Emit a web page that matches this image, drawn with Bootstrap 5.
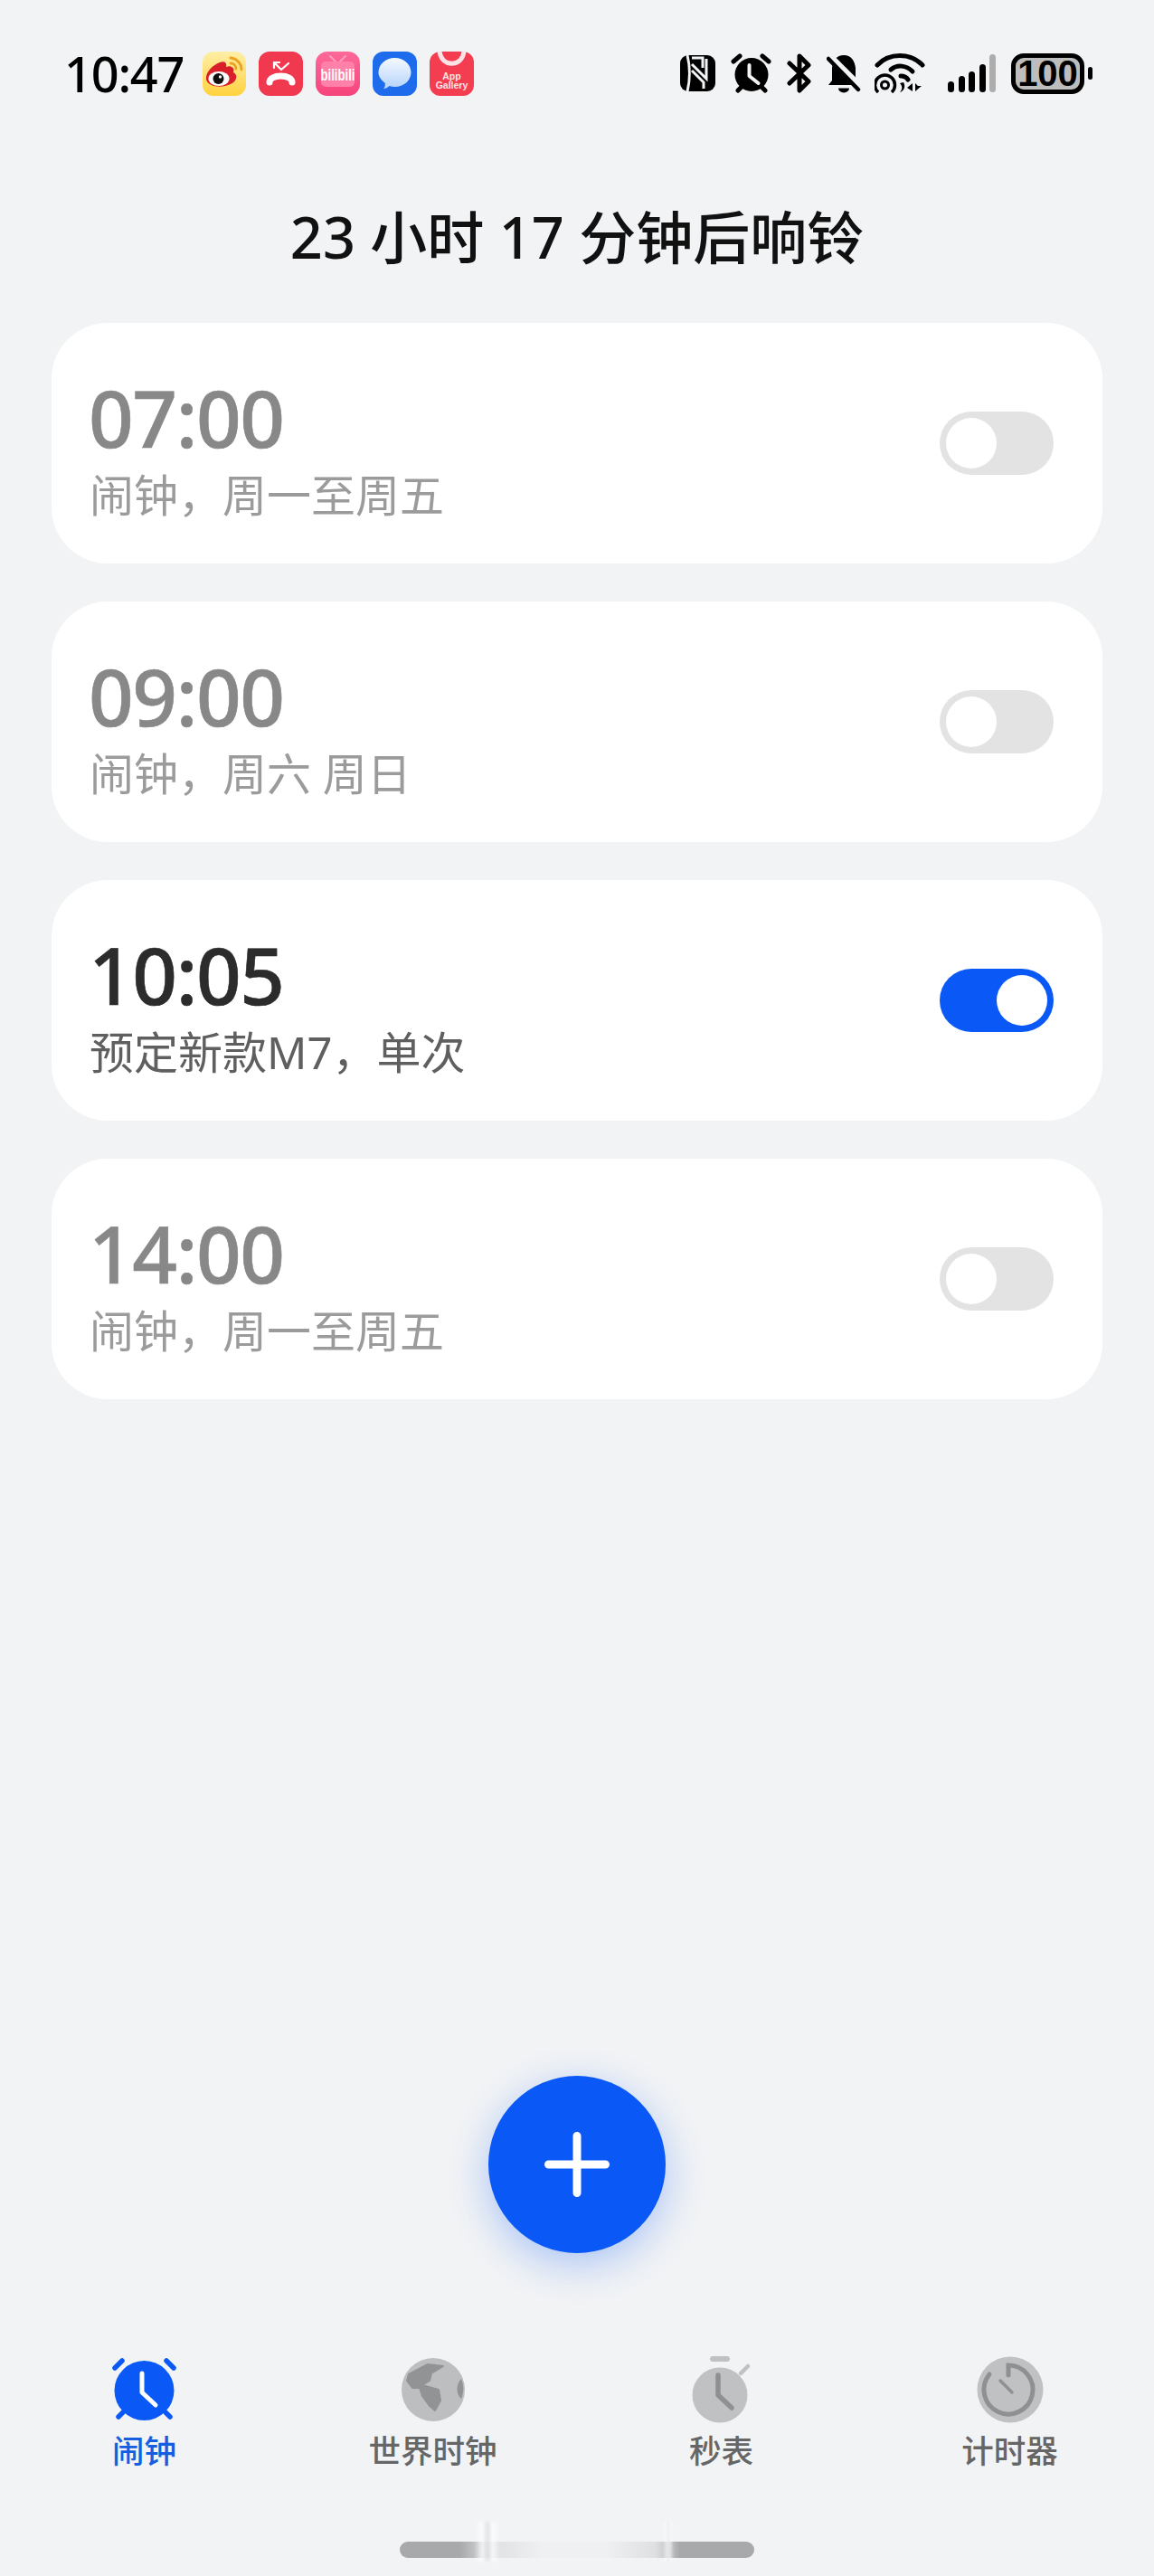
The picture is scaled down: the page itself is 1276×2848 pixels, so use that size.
<!DOCTYPE html>
<html lang="zh-CN">
<head>
    <meta charset="UTF-8">
    <meta name="viewport" content="width=device-width, initial-scale=1">
    <title>闹钟</title>
    <link href="https://cdn.jsdelivr.net/npm/bootstrap@5.3.0/dist/css/bootstrap.min.css" rel="stylesheet">
    <style>
        body {
            background: #f1f3f5;
            font-family: "Noto Sans", "Noto Sans CJK SC", sans-serif;
            color: #000;
        }
        .phone-page { width: 1276px; height: 2848px; overflow: hidden; }

        .status-row { height: 58px; margin-top: 52px; padding: 0 68px 0 71px; }
        .status-time { font-size: 54px; line-height: 58px; font-weight: 500; letter-spacing: -1.2px; margin-right: 21px; white-space: nowrap; }
        .app-icons { gap: 14px; }
        .sys-icons { gap: 17px; }
        .app-icons svg, .sys-icons svg { display: block; }
        .wifi-ico { margin: 0 8px 0 -2px; }
        .batt-wrap { gap: 4px; }
        .batt-box {
            width: 81px; height: 45px; border: 5px solid #000; border-radius: 14px;
            background: #bdbdbd; font-family: "Liberation Sans", sans-serif;
            font-weight: 700; font-size: 40px; line-height: 35px; text-align: center;
        }
        .batt-tip { width: 5px; height: 14px; background: #000; border-radius: 3px; }

        .page-title { font-size: 63px; line-height: 80px; font-weight: 500; margin: 112px 0 55px; color: #111; }

        .alarm-list { padding: 0 57px; gap: 42px; }
        .alarm-item { height: 266px; border: 0; border-radius: 62px; background: #fff; }
        .alarm-inner { padding: 0 54px 0 44px; }
        .alarm-text { padding-top: 22px; height: 180px; }
        .alarm-time { font-size: 87px; line-height: 78px; font-weight: 500; margin-left: -3px; letter-spacing: -1.4px; color: #2c2c2c; -webkit-text-stroke: .6px currentColor; }
        .alarm-label { font-size: 49px; line-height: 80px; margin: 7px 0 0 -2px; color: #5f5f5f; }
        .alarm-off .alarm-time { color: #888; }
        .alarm-off .alarm-label { color: #9b9b9b; }

        .switch-track { width: 126px; height: 70px; padding: 7px; border-radius: 35px; background: #e3e3e3; }
        .switch-track.is-on { background: #0a59f7; justify-content: flex-end; }
        .switch-knob { width: 56px; height: 56px; border-radius: 50%; background: #fff; }

        .add-btn {
            width: 196px; height: 196px; padding: 0; border: 0;
            background: #0a59f7; box-shadow: 0 12px 44px rgba(10, 89, 247, .3);
        }
        .add-wrap { margin-top: auto; }

        .tab-bar { margin-top: 114px; }
        .tab-icon { height: 74px; }
        .tab-label { font-size: 35.5px; line-height: 44px; font-weight: 500; color: #666; margin-top: 8px; }
        .tab-label.is-active { color: #155ee0; }

        .home-bar {
            width: 392px; height: 18px; border-radius: 9px; margin: 79px auto 20px;
            background: linear-gradient(to right, #a8a9ab 0, #a8a9ab 17%, #dfe0e2 26%, #eef0f2 40%, #eef0f2 58%, #dfe0e2 72%, #c4c5c7 76%, #a8a9ab 79%, #a8a9ab 100%);
        }
        .home-streak {
            position: absolute; top: -22px; height: 44px; filter: blur(1.5px); opacity: .75;
            background: linear-gradient(to right, rgba(255,255,255,0), #fff 30%, #dcdde0 50%, #fff 70%, rgba(255,255,255,0));
        }
    </style>
</head>
<body>
<div class="phone-page d-flex flex-column">

    <div class="status-row d-flex justify-content-between align-items-center">
        <div class="d-flex align-items-center">
            <div class="status-time">10:47</div>
            <div class="app-icons d-flex">
                <!-- weibo -->
                <svg width="48" height="49" viewBox="0 0 48 49">
                    <defs><linearGradient id="wbBg" x1="0" y1="0" x2="0" y2="1"><stop offset="0" stop-color="#ffeea6"/><stop offset="1" stop-color="#ffd23f"/></linearGradient></defs>
                    <rect width="48" height="49" rx="12" fill="url(#wbBg)"/>
                    <path d="M4 31C3 23 11 15 19 12c6-2 8 1 7 5 6-2 10 1 8 6 4 2 4 6 2 9-5 8-29 10-32-1z" fill="#d9202a"/>
                    <ellipse cx="18" cy="30" rx="11.500" ry="8" fill="#fff"/>
                    <circle cx="17.500" cy="30" r="6" fill="#111"/>
                    <circle cx="19.500" cy="28" r="1.700" fill="#fff"/>
                    <path d="M31 7c7 1 12 6 12 13M31 13c4 0 6 3 6 6" fill="none" stroke="#eda221" stroke-width="2.800" stroke-linecap="round"/>
                </svg>
                <!-- missed call -->
                <svg width="49" height="49" viewBox="0 0 49 49">
                    <rect width="49" height="49" rx="12" fill="#f0384f"/>
                    <path d="M12 34c0-4 5-7 12.500-7s12.500 3 12.500 7" fill="none" stroke="#fff" stroke-width="7" stroke-linecap="round"/>
                    <path d="M33 13l-8 7-8-8m0 0v6m0-6h6" fill="none" stroke="#fff" stroke-width="2.200" stroke-linecap="round" stroke-linejoin="round"/>
                </svg>
                <!-- bilibili -->
                <svg width="49" height="49" viewBox="0 0 49 49">
                    <defs><linearGradient id="blBg" x1="0" y1="0" x2="0" y2="1"><stop offset="0" stop-color="#fc6a99"/><stop offset="1" stop-color="#f6447c"/></linearGradient></defs>
                    <rect width="49" height="49" rx="13" fill="url(#blBg)"/>
                    <path d="M16 5l6 6M33 5l-6 6" stroke="#ff9dbc" stroke-width="2" stroke-linecap="round"/>
                    <rect x="6" y="11" width="37" height="28" rx="5" fill="#ff80a8"/>
                    <text x="24.500" y="32" text-anchor="middle" font-family="Liberation Sans, sans-serif" font-size="18" font-weight="700" fill="#fff" textLength="38" lengthAdjust="spacingAndGlyphs">bilibili</text>
                </svg>
                <!-- messages -->
                <svg width="49" height="49" viewBox="0 0 49 49">
                    <defs><linearGradient id="msgBub" x1="0" y1="0" x2="0" y2="1"><stop offset="0" stop-color="#f5f9ff"/><stop offset="1" stop-color="#b5d3fb"/></linearGradient></defs>
                    <rect width="49" height="49" rx="12" fill="#1e6ceb"/>
                    <path d="M24.500 7c10 0 18 7 18 16s-8 16-18 16c-2 0-4-.3-6-.9-2 2-4 2.900-6.500 2.900 1.500-1.500 2-3.500 1.800-6C9 31 6.500 27.500 6.500 23c0-9 8-16 18-16z" fill="url(#msgBub)"/>
                </svg>
                <!-- appgallery -->
                <svg width="49" height="49" viewBox="0 0 49 49">
                    <rect width="49" height="49" rx="12" fill="#f43d51"/>
                    <path d="M11 -1C12 18 37 18 38 -1" fill="none" stroke="#fde3e5" stroke-width="5"/>
                    <text x="24.500" y="31" text-anchor="middle" font-family="Liberation Sans, sans-serif" font-size="10.500" font-weight="700" fill="#fde3e5">App</text>
                    <text x="24.500" y="41" text-anchor="middle" font-family="Liberation Sans, sans-serif" font-size="10.500" font-weight="700" fill="#fde3e5">Gallery</text>
                </svg>
            </div>
        </div>

        <div class="sys-icons d-flex align-items-center">
            <!-- nfc -->
            <svg width="39" height="44" viewBox="0 0 39 44">
                <rect y="2" width="39" height="40" rx="9" fill="#000"/>
                <path d="M8 2c3 12 3 28 0 40M13 5h12v11M13 19l13 13V39M13 12l16 16V6" fill="none" stroke="#f1f3f5" stroke-width="3"/>
            </svg>
            <!-- alarm -->
            <svg width="45" height="44" viewBox="0 0 45 44">
                <circle cx="23" cy="23.500" r="18.500" fill="#000"/>
                <path d="M3 9l7-6M42 9l-7-6M8 41l4-4M38 41l-4-4" stroke="#000" stroke-width="5" stroke-linecap="round"/>
                <path d="M20.500 13v12l10 8" fill="none" stroke="#f1f3f5" stroke-width="4" stroke-linecap="round" stroke-linejoin="round"/>
            </svg>
            <!-- bluetooth -->
            <svg width="27" height="44" viewBox="0 0 27 44">
                <path d="M3 11l21 20-10 10V3l10 10L3 33" fill="none" stroke="#000" stroke-width="5" stroke-linecap="round" stroke-linejoin="round"/>
            </svg>
            <!-- bell off -->
            <svg width="38" height="44" viewBox="0 0 38 44">
                <path d="M19 2c8 0 12 6 13 14v14l4 5H2l4-5V16C7 8 11 2 19 2z" fill="#000"/>
                <path d="M13 38.500a6 5 0 0 0 12 0z" fill="#000"/>
                <path d="M4 4l38 38" stroke="#f1f3f5" stroke-width="8"/>
                <path d="M2 6l33 34" stroke="#000" stroke-width="4.500" stroke-linecap="round"/>
            </svg>
            <!-- wifi -->
            <svg class="wifi-ico" width="56" height="44" viewBox="0 0 56 44">
                <path d="M3 13C16 -1 40 -1 53 13" fill="none" stroke="#000" stroke-width="5" stroke-linecap="round"/>
                <path d="M18 18c7-6 17-5 24 2" fill="none" stroke="#000" stroke-width="5" stroke-linecap="round"/>
                <path d="M29 25c3 0 6 1 8 4" fill="none" stroke="#000" stroke-width="5" stroke-linecap="round"/>
                <path d="M4 43A11 11 0 1 1 19 43" fill="none" stroke="#000" stroke-width="3.500"/>
                <circle cx="11.500" cy="35" r="4" fill="none" stroke="#000" stroke-width="3"/>
                <path d="M28 33c3 3 3 7 0 10 4-1 7-6 4-11z" fill="#000"/>
                <path d="M42 33v9l-6-4zM45 33v9l7-6h-4z" fill="#000"/>
            </svg>
            <!-- signal -->
            <svg width="53" height="44" viewBox="0 0 53 44">
                <rect x="0" y="31" width="7" height="12" rx="3.500"/>
                <rect x="12" y="25" width="7" height="18" rx="3.500"/>
                <rect x="23" y="20" width="7" height="23" rx="3.500"/>
                <rect x="35" y="12" width="7" height="31" rx="3.500"/>
                <rect x="46" y="1" width="7" height="42" rx="3.500" fill="#adadad"/>
            </svg>
            <div class="batt-wrap d-flex align-items-center">
                <div class="batt-box">100</div>
                <div class="batt-tip"></div>
            </div>
        </div>
    </div>

    <h1 class="page-title text-center">23 小时 17 分钟后响铃</h1>

    <div class="alarm-list d-flex flex-column">
        <div class="card alarm-item alarm-off">
            <div class="card-body alarm-inner d-flex justify-content-between align-items-center">
                <div class="alarm-text"><div class="alarm-time">07:00</div><div class="alarm-label">闹钟，周一至周五</div></div>
                <div class="switch-track d-flex"><div class="switch-knob"></div></div>
            </div>
        </div>
        <div class="card alarm-item alarm-off">
            <div class="card-body alarm-inner d-flex justify-content-between align-items-center">
                <div class="alarm-text"><div class="alarm-time">09:00</div><div class="alarm-label">闹钟，周六 周日</div></div>
                <div class="switch-track d-flex"><div class="switch-knob"></div></div>
            </div>
        </div>
        <div class="card alarm-item">
            <div class="card-body alarm-inner d-flex justify-content-between align-items-center">
                <div class="alarm-text"><div class="alarm-time">10:05</div><div class="alarm-label">预定新款M7，单次</div></div>
                <div class="switch-track is-on d-flex"><div class="switch-knob"></div></div>
            </div>
        </div>
        <div class="card alarm-item alarm-off">
            <div class="card-body alarm-inner d-flex justify-content-between align-items-center">
                <div class="alarm-text"><div class="alarm-time">14:00</div><div class="alarm-label">闹钟，周一至周五</div></div>
                <div class="switch-track d-flex"><div class="switch-knob"></div></div>
            </div>
        </div>
    </div>

    <div class="add-wrap text-center">
        <button class="btn add-btn rounded-circle" type="button" aria-label="添加闹钟">
            <svg width="72" height="72" viewBox="0 0 72 72" class="d-block mx-auto">
                <path d="M36 4.500v63M4.500 36h63" stroke="#fff" stroke-width="9" stroke-linecap="round"/>
            </svg>
        </button>
    </div>

    <div class="tab-bar row g-0 text-center">
        <div class="col-3">
            <div class="tab-icon d-flex justify-content-center">
                <svg width="74" height="74" viewBox="0 0 74 74">
                    <circle cx="36.500" cy="38" r="33" fill="#0a59f7"/>
                    <path d="M4 13l8-8M69 13l-8-8M8 67l5-5M65 67l-5-5" stroke="#0a59f7" stroke-width="5.500" stroke-linecap="round"/>
                    <path d="M34 19v21l15 14" fill="none" stroke="#fff" stroke-width="5" stroke-linecap="round" stroke-linejoin="round"/>
                </svg>
            </div>
            <div class="tab-label is-active">闹钟</div>
        </div>
        <div class="col-3">
            <div class="tab-icon d-flex justify-content-center">
                <svg width="70" height="74" viewBox="0 0 70 74">
                    <circle cx="35" cy="37" r="35" fill="#bdbec0"/>
                    <path d="M8 20L29 9l17 2-13 8-2 8-8 5 18 5 2 12-6 11-6-5-8-11-3-9h-8l-6-8z" fill="#929395" stroke="#929395" stroke-width="2" stroke-linejoin="round"/>
                    <path d="M66 25c-6 6-6 17 0 22 3-7 3-15 0-22z" fill="#929395"/>
                </svg>
            </div>
            <div class="tab-label">世界时钟</div>
        </div>
        <div class="col-3">
            <div class="tab-icon d-flex justify-content-center">
                <svg width="66" height="74" viewBox="0 0 66 74">
                    <circle cx="31" cy="43" r="30.500" fill="#c0c1c3"/>
                    <rect x="20" y="0" width="22" height="6" rx="3" fill="#c0c1c3"/>
                    <path d="M54 19l8-8" stroke="#c0c1c3" stroke-width="4.500" stroke-linecap="round"/>
                    <path d="M29 21v22l15 14" fill="none" stroke="#8f9092" stroke-width="5.500" stroke-linecap="round" stroke-linejoin="round"/>
                </svg>
            </div>
            <div class="tab-label">秒表</div>
        </div>
        <div class="col-3">
            <div class="tab-icon d-flex justify-content-center">
                <svg width="74" height="74" viewBox="0 0 74 74">
                    <circle cx="37" cy="37" r="36.500" fill="#c0c1c3"/>
                    <path d="M35 21V10a27 27 0 1 1-21 10" fill="none" stroke="#8f9092" stroke-width="5" stroke-linecap="round"/>
                    <path d="M26 27l13 13" stroke="#8f9092" stroke-width="3.500" stroke-linecap="round"/>
                </svg>
            </div>
            <div class="tab-label">计时器</div>
        </div>
    </div>

    <div class="home-bar position-relative">
        <div class="home-streak" style="left:83px;width:28px"></div>
        <div class="home-streak" style="left:292px;width:10px"></div>
    </div>
</div>
<script src="https://cdn.jsdelivr.net/npm/bootstrap@5.3.0/dist/js/bootstrap.bundle.min.js"></script>
</body>
</html>
